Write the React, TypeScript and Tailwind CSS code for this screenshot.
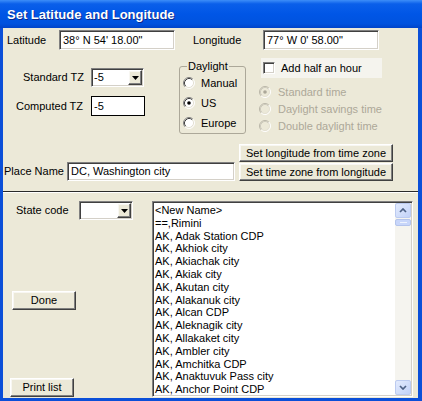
import React from "react";

// Windows XP style "Set Latitude and Longitude" dialog

const sunken =
  "border border-t-[#808080] border-l-[#808080] border-b-white border-r-white shadow-[inset_1px_1px_0_#404040,inset_-1px_-1px_0_#d4d0c8]";
const raised =
  "border border-t-white border-l-white border-b-[#404040] border-r-[#404040] shadow-[inset_-1px_-1px_0_#808080,inset_1px_1px_0_#f8f7f2] bg-[#ece9d8]";

const places = [
  "<New Name>",
  "==,Rimini",
  "AK, Adak Station CDP",
  "AK, Akhiok city",
  "AK, Akiachak city",
  "AK, Akiak city",
  "AK, Akutan city",
  "AK, Alakanuk city",
  "AK, Alcan CDP",
  "AK, Aleknagik city",
  "AK, Allakaket city",
  "AK, Ambler city",
  "AK, Amchitka CDP",
  "AK, Anaktuvuk Pass city",
  "AK, Anchor Point CDP",
];

function TextBox({ value, className }: { value: string; className: string }) {
  return (
    <div className={`flex items-center bg-white pl-[3px] whitespace-nowrap ${sunken} ${className}`}>
      {value}
    </div>
  );
}

function Combo({ value, className }: { value: string; className: string }) {
  return (
    <div className={`flex bg-white p-[1px] ${sunken} ${className}`}>
      <div className="flex flex-1 items-center pl-[1px]">{value}</div>
      <div className={`flex w-[14px] items-center justify-center ${raised}`}>
        <svg width="7" height="4" viewBox="0 0 7 4">
          <path d="M0 0h7L3.5 4z" fill="#000" />
        </svg>
      </div>
    </div>
  );
}

function Button({ label, className }: { label: string; className: string }) {
  return (
    <div className={`flex items-center justify-center whitespace-nowrap ${raised} ${className}`}>
      {label}
    </div>
  );
}

function Radio({ checked, disabled }: { checked?: boolean; disabled?: boolean }) {
  const dark = disabled ? "#b9b6a8" : "#808080";
  const darker = disabled ? "#cdcabd" : "#404040";
  return (
    <svg width="12" height="12" viewBox="0 0 12 12" className="shrink-0">
      <circle cx="6" cy="6" r="5" fill={disabled ? "#ece9d8" : "#fff"} />
      <path d="M2.11 9.89A5.5 5.5 0 0 1 9.89 2.11" fill="none" stroke={dark} />
      <path d="M2.82 9.18A4.5 4.5 0 0 1 9.18 2.82" fill="none" stroke={darker} />
      <path d="M9.89 2.11A5.5 5.5 0 0 1 2.11 9.89" fill="none" stroke="#fff" />
      <path d="M9.18 2.82A4.5 4.5 0 0 1 2.82 9.18" fill="none" stroke="#e4e1d4" />
      {checked && <circle cx="6" cy="6" r="1.8" fill={disabled ? "#aca899" : "#000"} />}
    </svg>
  );
}

function ScrollButton({ up }: { up?: boolean }) {
  return (
    <div className="flex h-[15px] items-center justify-center rounded-[2px] border border-[#bccbf0] bg-[linear-gradient(135deg,#e3ebfd,#c2d2f8)]">
      <svg width="8" height="5" viewBox="0 0 8 5">
        <path
          d={up ? "M1 4L4 1l3 3" : "M1 1l3 3 3-3"}
          stroke="#4d6185"
          strokeWidth="1.7"
          fill="none"
        />
      </svg>
    </div>
  );
}

export default function App() {
  return (
    <div className="flex h-[401px] w-[422px] flex-col overflow-hidden bg-[#0b4fd8] font-['Liberation_Sans',Arial,sans-serif] text-[11px] text-black">
      {/* title bar */}
      <div className="flex h-[28px] shrink-0 items-center bg-[linear-gradient(180deg,#3d8ef8_0%,#0a5fea_14%,#0056e6_50%,#0052de_85%,#0043c9_100%)] pl-[7px] pt-[1px]">
        <span className="text-[13px] font-bold text-white [text-shadow:1px_1px_0_#0c2a8c]">
          Set Latitude and Longitude
        </span>
      </div>

      {/* client area */}
      <div className="ml-[3px] mr-[4px] flex h-[370px] shrink-0 flex-col bg-[#ece9d8]">
        {/* latitude / longitude */}
        <div className="mt-[2px] flex h-[20px] items-center pl-[4px]">
          <span className="w-[52px]">Latitude</span>
          <TextBox value={"38° N 54' 18.00\""} className="h-[20px] w-[116px]" />
          <span className="ml-[18px] w-[70px]">Longitude</span>
          <TextBox value={"77° W 0' 58.00\""} className="h-[20px] w-[116px]" />
        </div>

        {/* time zone block */}
        <div className="flex h-[94px]">
          <div className="flex w-[176px] flex-col">
            <div className="mt-[18px] flex items-center pl-[20px]">
              <span className="w-[68px]">Standard TZ</span>
              <Combo value="-5" className="h-[19px] w-[53px]" />
            </div>
            <div className="mt-[9px] flex items-center pl-[13px]">
              <span className="w-[75px]">Computed TZ</span>
              <div className="flex h-[20px] w-[54px] items-center border border-black bg-white pl-[2px]">
                -5
              </div>
            </div>
          </div>

          <div className="relative mt-[16px] h-[68px] w-[67px] rounded-[3px] border border-[#aca899]">
            <span className="absolute left-[7px] top-[-8px] bg-[#ece9d8] px-[1px] leading-[14px]">
              Daylight
            </span>
            <div className="flex flex-col gap-[6px] pl-[3px] pt-[9px]">
              {["Manual", "US", "Europe"].map((t) => (
                <div key={t} className="flex h-[14px] items-center gap-[6px]">
                  <Radio checked={t === "US"} />
                  <span>{t}</span>
                </div>
              ))}
            </div>
          </div>

          <div className="ml-[13px] flex flex-col">
            <div className="ml-[2px] mt-[8px] flex h-[20px] items-center gap-[6px] bg-[#f5f4ee] pl-[2px] pr-[5px]">
              <div className={`h-[12px] w-[12px] bg-white ${sunken}`} />
              <span>Add half an hour</span>
            </div>
            <div className="mt-[7px] flex flex-col gap-[3px] text-[#aca899]">
              {["Standard time", "Daylight savings time", "Double daylight time"].map((t, i) => (
                <div key={t} className="flex h-[14px] items-center gap-[7px]">
                  <Radio checked={i === 0} disabled />
                  <span>{t}</span>
                </div>
              ))}
            </div>
          </div>
        </div>

        {/* place name + buttons */}
        <div className="flex items-end">
          <div className="flex h-[19px] items-center pl-[1px]">
            <span className="w-[63px]">Place Name</span>
            <TextBox value="DC, Washington city" className="h-[19px] w-[168px]" />
          </div>
          <div className="ml-[4px] flex flex-col gap-[1px]">
            <Button label="Set longitude from time zone" className="h-[18px] w-[154px]" />
            <Button label="Set time zone from longitude" className="h-[18px] w-[154px]" />
          </div>
        </div>

        {/* separator */}
        <div className="mt-[10px] border-t border-b border-t-[#2a2a2a] border-b-white" />

        {/* state + list */}
        <div className="flex pt-[8px]">
          <div className="flex w-[149px] flex-col">
            <div className="flex items-center pl-[13px]">
              <span className="w-[63px]">State code</span>
              <Combo value="" className="h-[19px] w-[54px]" />
            </div>
            <Button label="Done" className="ml-[9px] mt-[71px] h-[19px] w-[64px]" />
            <Button label="Print list" className="ml-[7px] mt-[68px] h-[19px] w-[64px]" />
          </div>

          <div className={`flex h-[196px] w-[261px] bg-white ${sunken}`}>
            <div className="flex-1 overflow-hidden pl-[2px] pt-[2px] leading-[12.8px] whitespace-nowrap">
              {places.map((p) => (
                <div key={p}>{p}</div>
              ))}
            </div>
            <div className="my-[1px] mr-[1px] flex w-[16px] flex-col bg-[#f5f4ef]">
              <ScrollButton up />
              <div className="mt-[1px] flex h-[7px] items-center justify-center rounded-[2px] border border-[#b4c4ec] bg-[#c8d6fa]">
                <div className="h-px w-[7px] bg-[#eef3fe]" />
              </div>
              <div className="flex-1" />
              <ScrollButton />
            </div>
          </div>
        </div>
      </div>
    </div>
  );
}
